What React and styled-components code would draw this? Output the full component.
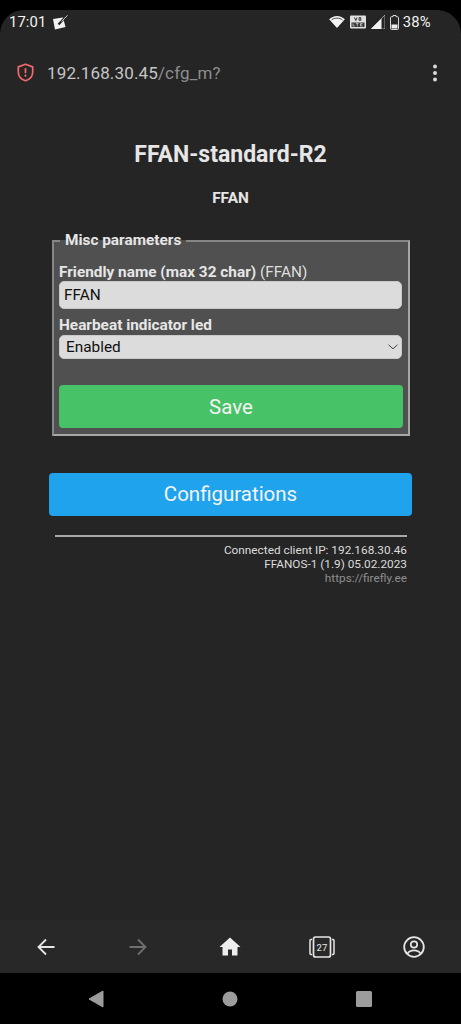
import React from "react";
import styled, { createGlobalStyle } from "styled-components";

const Global = createGlobalStyle`
  html, body { margin: 0; padding: 0; background: #000; }
  * { box-sizing: border-box; }
  body { font-family: Roboto, "Liberation Sans", sans-serif; }
`;
const Screen = styled.div`
  width: 461px; height: 1024px; background: #000; display: flex; flex-direction: column; padding-top: 10px; overflow: hidden;
`;
const Chrome = styled.div`
  flex: 1; min-height: 0; background: #252525; border-radius: 24px 24px 0 0; display: flex; flex-direction: column;
`;
const StatusBar = styled.div`
  height: 24px; padding: 0 30px 0 9px; display: flex; align-items: center; justify-content: space-between; color: #f2f2f2; font-size: 14.8px;
`;
const StatusGroup = styled.div`
  display: flex; align-items: center; gap: ${p => p.$gap || 6}px;
`;
const Time = styled.span`
  letter-spacing: 0.1px;
`;
const Percent = styled.span`
  letter-spacing: 0.3px; margin-left: -1px;
`;
const AddressBar = styled.div`
  height: 55px; margin-top: 10px; padding: 2px 23px 0 17px; display: flex; align-items: center; gap: 13px;
`;
const Url = styled.div`
  flex: 1; font-size: 17px; color: #c6c6c6; letter-spacing: 0.15px;
`;
const UrlPath = styled.span`
  color: #8e8e8e;
`;
const Page = styled.main`
  flex: 1; min-height: 0; display: flex; flex-direction: column; padding: 0 49px;
`;
const Title = styled.h2`
  margin: 40px 0 0; height: 32px; line-height: 32px; text-align: center; font-size: 23.04px; font-weight: 700; color: #e6e6e6;
`;
const Subtitle = styled.h3`
  margin: 17px 0 0; height: 20px; line-height: 20px; text-align: center; font-size: 15.36px; font-weight: 700; color: #e6e6e6;
`;
const Fieldset = styled.fieldset`
  margin: 24px 2px 0 3px; padding: 0 6px 0 5px; height: 204px; background: #505050; border: 2px solid; border-color: #868686 #a6a6a6 #a6a6a6 #868686; min-width: 0;
`;
const Legend = styled.legend`
  padding: 0 5px; margin-left: 1px; font-size: 15.36px; font-weight: 700; color: #e6e6e6; line-height: 17px;
`;
const Label = styled.label`
  display: block; font-size: 15.36px; line-height: 17px; font-weight: 700; color: #e6e6e6; margin-top: ${p => p.$mt}px; height: 17px;
`;
const Hint = styled.span`
  font-weight: 400; color: #dedede;
`;
const TextField = styled.input`
  display: block; width: 343px; height: 28px; margin-top: 0; padding: 0 4px; border: 1px solid #c9c9c9; border-radius: 5px; background: #dcdcdc; color: #111; font: 400 15.36px Roboto, sans-serif; outline: none;
`;
const SelectWrap = styled.div`
  width: 343px; height: 24px; margin-top: 1px; padding: 0 3px 0 6px; border: 1px solid #c9c9c9; border-radius: 5px; background: #dcdcdc; color: #111; font-size: 15.36px; display: flex; align-items: center; justify-content: space-between;
`;
const SaveButton = styled.button`
  display: block; width: 344px; height: 43px; margin-top: 26px; padding: 0; border: 0; border-radius: 4px; background: #47c266; color: #f4f4f4; font: 400 20.48px Roboto, sans-serif;
`;
const ConfigButton = styled.button`
  display: block; width: 363px; height: 43px; margin-top: 37px; padding: 0 0 2px; border: 0; border-radius: 4px; background: #1fa3ec; color: #f4f4f4; font: 400 20.48px Roboto, sans-serif;
`;
const Rule = styled.hr`
  width: 352px; height: 2px; margin: 19px 0 0 6px; border: 0; background: #a8a8a8;
`;
const Footer = styled.div`
  width: 352px; margin: 6px 0 0 6px; text-align: right; font-size: 11.8px; line-height: 14px; color: #dcdcdc;
`;
const FooterMuted = styled.div`
  color: #8e8e8e;
`;
const BottomNav = styled.nav`
  height: 53px; display: grid; grid-template-columns: repeat(5, 92px); justify-items: center; align-items: center; background: #282828; color: #e6e6e6;
`;
const SystemNav = styled.div`
  height: 51px; background: #000; display: grid; grid-template-columns: 104px 134px 134px; justify-items: end; align-items: center; flex: none;
`;

const Wifi = () => (
  <svg width="16" height="12" viewBox="0 0 17 13"><path d="M8.500 13 0 3.600C2.200 1.400 5.200 0 8.500 0S14.800 1.400 17 3.600Z" fill="#f4f4f4"/><path d="M2.600 4.200C4.200 3 6.200 2.300 8.500 2.300S12.800 3 14.400 4.200" fill="none" stroke="#252525" strokeWidth="0.900"/></svg>
);
const Volte = () => (
  <svg width="16" height="14" viewBox="0 0 16 14"><rect width="16" height="13" y="0.500" rx="1" fill="#e0e0e0"/><rect x="1.500" y="7.500" width="13" height="4.500" fill="#3a3a3a"/><path d="M4.500 2.500 5.800 5.500 7 2.500M9 2.700h1.800v2.600H9Z" fill="none" stroke="#222" strokeWidth="0.900"/><path d="M3 8.500v2.500h1.500M6 8.500h2.500M7.250 8.500v2.800M10.500 8.500v2.600h2M10.500 9.800h1.600M10.500 8.500h2" fill="none" stroke="#ddd" strokeWidth="0.700"/></svg>
);
const Signal = () => (
  <svg width="14" height="14" viewBox="0 0 14 14"><path d="M0 14 14 0V14Z" fill="none" stroke="#bbb" strokeWidth="0.800"/><path d="M0 14 10.500 3.500V14Z" fill="#f2f2f2"/></svg>
);
const Battery = () => (
  <svg width="9" height="15" viewBox="0 0 9 15"><path d="M3 0.500h3v1.200h1.500q1 0 1 1V13.500q0 1-1 1h-6q-1 0-1-1V2.700q0-1 1-1H3Z" fill="none" stroke="#d8d8d8" strokeWidth="1"/><rect x="1.500" y="9.500" width="6" height="4" fill="#eee"/></svg>
);
const Notice = () => (
  <svg width="15" height="15" viewBox="0 0 15 15"><path d="M0 4 10 2.500 12.500 12 2 14.500Z" fill="#f2f2f2"/><path d="M12 2.500 5.500 9.500" stroke="#252525" strokeWidth="2.200"/><path d="M14.500 .3 8.500 6.500" stroke="#cfcfcf" strokeWidth="1"/></svg>
);
const ShieldAlert = () => (
  <svg width="17" height="19" viewBox="0 0 17 19" fill="none"><path d="M8.500 1.200 15.700 3.900V9c0 4.200-3 7.500-7.200 8.800C4.300 16.500 1.300 13.200 1.300 9V3.900Z" stroke="#f0696b" strokeWidth="1.700" strokeLinejoin="round"/><path d="M8.500 5.200v5" stroke="#f0696b" strokeWidth="1.800"/><circle cx="8.500" cy="12.700" r="1.100" fill="#f0696b"/></svg>
);
const Kebab = () => (
  <svg width="6" height="20" viewBox="0 0 6 20" fill="#d9d9d9"><circle cx="3" cy="3.500" r="2"/><circle cx="3" cy="10" r="2"/><circle cx="3" cy="16.500" r="2"/></svg>
);
const Chevron = () => (
  <svg width="10" height="6" viewBox="0 0 10 6" fill="none"><path d="M.5 .8 5 4.800 9.500 .8" stroke="#444" strokeWidth="1"/></svg>
);
const ArrowLeft = () => (
  <svg width="18" height="18" viewBox="0 0 18 18" fill="none"><path d="M17.500 9H1.500M9 1.500 1.500 9 9 16.500" stroke="#e6e6e6" strokeWidth="1.800"/></svg>
);
const ArrowRight = () => (
  <svg width="18" height="18" viewBox="0 0 18 18" fill="none"><path d="M.5 9h16M9 1.500 16.500 9 9 16.500" stroke="#707070" strokeWidth="1.800"/></svg>
);
const Home = () => (
  <svg width="22" height="19" viewBox="0 0 22 19" fill="#eeeeee"><path d="M11 .5 .5 10h3v8.500h5.500v-6h4v6H18.500V10h3Z"/></svg>
);
const TabCount = styled.text`
  font: 500 9.500px Roboto, sans-serif; fill: #d0d0d0;
`;
const Tabs = () => (
  <svg width="26" height="22" viewBox="0 0 26 22" fill="none"><rect x="4.500" y="1" width="17" height="20" rx="2" stroke="#e6e6e6" strokeWidth="1.700"/><path d="M3 3.500H2q-1 0-1 1v13q0 1 1 1h1M23 3.500h1q1 0 1 1v13q0 1-1 1h-1" stroke="#e6e6e6" strokeWidth="1.500"/><TabCount x="13" y="14.500" textAnchor="middle">27</TabCount></svg>
);
const Account = () => (
  <svg width="22" height="22" viewBox="0 0 22 22" fill="none"><circle cx="11" cy="11" r="9.800" stroke="#e6e6e6" strokeWidth="1.800"/><circle cx="11" cy="8.500" r="3.200" stroke="#e6e6e6" strokeWidth="1.700"/><path d="M4.500 17.500C6 15 8.500 14.300 11 14.300S16 15 17.500 17.500" stroke="#e6e6e6" strokeWidth="1.700"/></svg>
);
const Back = () => (
  <svg width="16" height="18" viewBox="0 0 16 18"><path d="M15 1 1 9l14 8Z" fill="#9c9c9c" stroke="#9c9c9c" strokeLinejoin="round"/></svg>
);
const HomeDot = () => (
  <svg width="16" height="16" viewBox="0 0 16 16"><circle cx="8" cy="8" r="7.500" fill="#9c9c9c"/></svg>
);
const Recent = () => (
  <svg width="16" height="16" viewBox="0 0 16 16"><rect width="16" height="16" rx="1.500" fill="#9c9c9c"/></svg>
);

export default function App() {
  return (
    <Screen>
      <Global />
      <Chrome>
        <StatusBar>
          <StatusGroup $gap={7}><Time>17:01</Time><Notice /></StatusGroup>
          <StatusGroup $gap={5}><Wifi /><Volte /><Signal /><Battery /><Percent>38%</Percent></StatusGroup>
        </StatusBar>
        <AddressBar>
          <ShieldAlert />
          <Url>192.168.30.45<UrlPath>/cfg_m?</UrlPath></Url>
          <Kebab />
        </AddressBar>
        <Page>
          <Title>FFAN-standard-R2</Title>
          <Subtitle>FFAN</Subtitle>
          <Fieldset>
            <Legend>Misc parameters</Legend>
            <Label $mt={15}>Friendly name (max 32 char) <Hint>(FFAN)</Hint></Label>
            <TextField defaultValue="FFAN" />
            <Label $mt={8}>Hearbeat indicator led</Label>
            <SelectWrap>Enabled<Chevron /></SelectWrap>
            <SaveButton>Save</SaveButton>
          </Fieldset>
          <ConfigButton>Configurations</ConfigButton>
          <Rule />
          <Footer>
            <div>Connected client IP: 192.168.30.46</div>
            <div>FFANOS-1 (1.9) 05.02.2023</div>
            <FooterMuted>https://firefly.ee</FooterMuted>
          </Footer>
        </Page>
        <BottomNav>
          <ArrowLeft /><ArrowRight /><Home /><Tabs /><Account />
        </BottomNav>
      </Chrome>
      <SystemNav><Back /><HomeDot /><Recent /></SystemNav>
    </Screen>
  );
}
